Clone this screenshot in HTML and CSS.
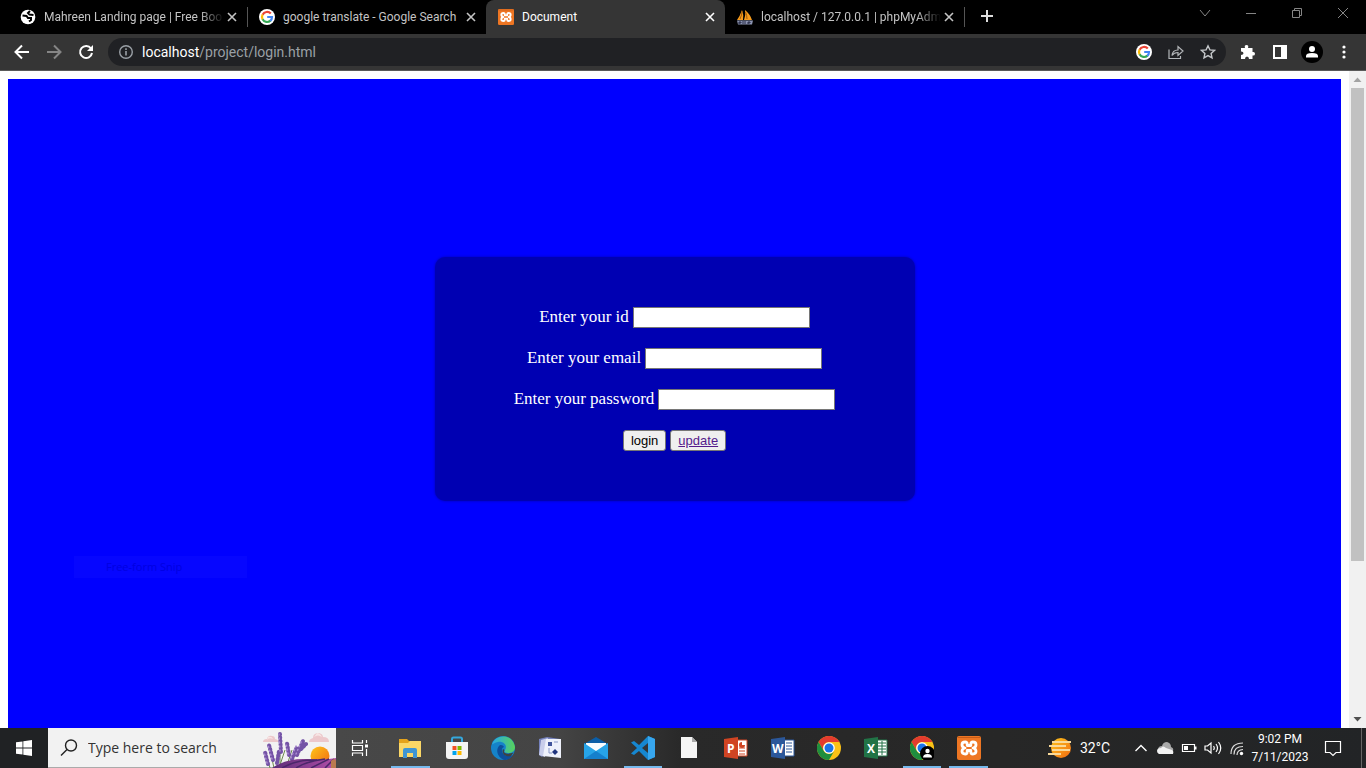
FILE: index.html
```html
<!DOCTYPE html>
<html lang="en">
<head>
<meta charset="utf-8">
<title>Document</title>
<link rel="stylesheet" href="styles.css">
</head>
<body>
<svg class="defs" width="0" height="0" aria-hidden="true">
  <defs>
    <symbol id="google" viewBox="0 0 16 16">
      <circle cx="8" cy="8" r="8" fill="#fff"/>
      <g fill="none" stroke-width="2.2">
        <path d="M11.8 4.6A5 5 0 0 0 3.6 5.7" stroke="#ea4335"/>
        <path d="M3.6 5.6a5 5 0 0 0 0 4.8" stroke="#fbbc05"/>
        <path d="M3.6 10.3a5 5 0 0 0 7.9 1.3" stroke="#34a853"/>
        <path d="M11.3 11.8A5 5 0 0 0 13 8H8.2" stroke="#4285f4"/>
      </g>
    </symbol>
    <symbol id="xampp" viewBox="0 0 24 24">
      <rect width="24" height="24" rx="2" fill="#ee7623"/>
      <path d="M1 1.500h22" stroke="#c75c18"/>
      <path d="M10.200 9.500V8q0-2-2-2Q5 6 5 8.700T8 12q-3 .6-3 3.300T8.200 18q2 0 2-2v-1.500M13.800 9.500V8q0-2 2-2Q19 6 19 8.700T16 12q3 .6 3 3.300T15.800 18q-2 0-2-2v-1.500M10.200 9.500h3.600M10.200 14.500h3.600" fill="none" stroke="#fff" stroke-width="2.800" stroke-linejoin="round" stroke-linecap="round"/>
    </symbol>
    <symbol id="close" viewBox="0 0 16 16">
      <path d="M4 4l8 8M12 4l-8 8" stroke="currentColor" stroke-width="1.600" fill="none"/>
    </symbol>
    <symbol id="chrome" viewBox="0 0 24 24">
      <circle cx="12" cy="12" r="12" fill="#fbc116"/>
      <path d="M1.600 6A12 12 0 0 1 22.400 6H12a6 6 0 0 0-5.200 9z" fill="#e33b2e"/>
      <path d="M1.600 6A12 12 0 0 0 12 24l5.200-9A6 6 0 0 1 6.800 15z" fill="#1e8e3e"/>
      <circle cx="12" cy="12" r="5.800" fill="#fff"/>
      <circle cx="12" cy="12" r="4.500" fill="#1a73e8"/>
    </symbol>
    <linearGradient id="sun" x1="0" y1="0" x2="1" y2="1"><stop offset="0" stop-color="#ffc61a"/><stop offset="1" stop-color="#f06a12"/></linearGradient>
    <linearGradient id="edgeTop" x1="0" y1="0" x2="1" y2="0"><stop offset="0" stop-color="#28a8e6"/><stop offset="1" stop-color="#58d35a"/></linearGradient>
    <linearGradient id="field" x1="0" y1="0" x2="1" y2="0"><stop offset="0" stop-color="#5c2d78"/><stop offset="1" stop-color="#b24fa8"/></linearGradient>
  </defs>
</svg>

<div class="screen">
  <header class="tabstrip">
    <nav class="tabs" aria-label="Tabs">
      <div class="tab">
        <svg class="favicon" viewBox="0 0 16 16"><circle cx="8" cy="8" r="7.300" fill="#fff"/><path d="M2.500 6.500l4 .5 1.500 2h3v2l-2 1.500M13.500 6l-4-.5L8 4l2-2" fill="none" stroke="#000" stroke-width="2"/></svg>
        <span class="tab-title fade">Mahreen Landing page | Free Boo</span>
        <button class="tab-close" aria-label="Close tab"><svg><use href="#close"/></svg></button>
      </div>
      <div class="tab divided">
        <svg class="favicon"><use href="#google"/></svg>
        <span class="tab-title">google translate - Google Search</span>
        <button class="tab-close" aria-label="Close tab"><svg><use href="#close"/></svg></button>
      </div>
      <div class="tab active">
        <svg class="favicon"><use href="#xampp"/></svg>
        <span class="tab-title">Document</span>
        <button class="tab-close" aria-label="Close tab"><svg><use href="#close"/></svg></button>
      </div>
      <div class="tab">
        <svg class="favicon" viewBox="0 0 16 16"><path d="M0 11Q3 7 5 1q2 5 1 10zM7 11q2-5 1-10 5 4 7 10z" fill="#f89c1c"/><path d="M3 10Q5 6 5 2M10 10Q10 6 8.500 3" stroke="#a35a08" fill="none"/><path d="M0 11.500h16l-1 4H1z" fill="#8b93b0"/><path d="M2 15v-2h2v1H2m4 1v-3M8 12v3M11 15v-2h2v1h-2" stroke="#262b45" fill="none"/></svg>
        <span class="tab-title fade">localhost / 127.0.0.1 | phpMyAdm</span>
        <button class="tab-close" aria-label="Close tab"><svg><use href="#close"/></svg></button>
      </div>
      <button class="new-tab" aria-label="New tab"><svg viewBox="0 0 16 16"><path d="M8 2v12M2 8h12" stroke="#ddd" stroke-width="2"/></svg></button>
    </nav>
    <div class="window-controls">
      <button aria-label="Search tabs"><svg viewBox="0 0 12 12"><path d="M1 3l5 6 5-6"/></svg></button>
      <button aria-label="Minimize"><svg viewBox="0 0 12 12"><path d="M1 6.500h10"/></svg></button>
      <button aria-label="Restore"><svg viewBox="0 0 12 12"><path d="M1.500 3.500h7v7h-7zM3.500 3.500v-2h7v7h-2"/></svg></button>
      <button aria-label="Close"><svg viewBox="0 0 12 12"><path d="M1 1l10 10M11 1L1 11"/></svg></button>
    </div>
  </header>

  <div class="toolbar">
    <button class="tool" aria-label="Back"><svg viewBox="0 0 16 16"><path d="M15 8H2M8 1.500L1.500 8 8 14.500" fill="none" stroke="#fff" stroke-width="2"/></svg></button>
    <button class="tool" aria-label="Forward"><svg viewBox="0 0 16 16"><path d="M1 8h13M8 1.500L14.500 8 8 14.500" fill="none" stroke="#858585" stroke-width="2"/></svg></button>
    <button class="tool" aria-label="Reload"><svg viewBox="0 0 16 16"><path d="M13 4.500A6 6 0 1 0 14 9" fill="none" stroke="#fff" stroke-width="2"/><path d="M15 1v6H9z" fill="#fff"/></svg></button>
    <div class="omnibox">
      <svg class="info" viewBox="0 0 16 16"><circle cx="8" cy="8" r="6.300" fill="none" stroke="#9aa0a6" stroke-width="1.400"/><path d="M8 7v4.500M8 4.300v1.600" stroke="#9aa0a6" stroke-width="1.600"/></svg>
      <a class="url" href="#login"><span class="host">localhost</span>/project/login.html</a>
      <button class="tool" aria-label="Google"><svg><use href="#google"/></svg></button>
      <button class="tool" aria-label="Share"><svg viewBox="0 0 16 16"><path d="M1 5.500v9h11.500V12M4 11.500Q4.500 6 10 6V2.500L15 7l-5 4.500V8.500Q6 8.500 4 11.500z" fill="none" stroke="#b4b7ba" stroke-width="1.200"/></svg></button>
      <button class="tool" aria-label="Bookmark"><svg viewBox="0 0 16 16"><path d="M8 1.800l1.900 4.100 4.500.5-3.300 3 .9 4.400L8 11.600l-4 2.200.9-4.400-3.300-3 4.500-.5z" fill="none" stroke="#c4c7ca" stroke-width="1.400"/></svg></button>
    </div>
    <button class="tool" aria-label="Extensions"><svg viewBox="0 0 16 16"><path d="M1 4h4q-1-3 1.500-3T8 4h4.500v4Q15 7.500 15 9.700t-2.500 1.800V15H9q0-2.500-2-2.500T5 15H1v-4q2.500 0 2.500-1.800T1 7.500z" fill="#fff"/></svg></button>
    <button class="tool" aria-label="Side panel"><svg viewBox="0 0 16 16"><path d="M1 1h14v14H1zM3 3v10h6V3z" fill="#fff" fill-rule="evenodd"/></svg></button>
    <button class="tool profile" aria-label="Profile"><svg viewBox="0 0 22 22"><circle cx="11" cy="11" r="11"/><circle cx="11" cy="8" r="3" fill="#fff"/><path d="M5 16.500v-1.500q0-3 6-3t6 3v1.500z" fill="#fff"/></svg></button>
    <button class="tool" aria-label="Menu"><svg viewBox="0 0 16 16"><g fill="#fff"><circle cx="8" cy="3" r="1.600"/><circle cx="8" cy="8" r="1.600"/><circle cx="8" cy="13" r="1.600"/></g></svg></button>
  </div>

  <div class="viewport">
    <main class="page" id="login">
      <form class="card">
        <div class="row"><label for="user-id">Enter your id</label><input id="user-id" type="text"></div>
        <div class="row"><label for="email">Enter your email</label><input id="email" type="email"></div>
        <div class="row"><label for="password">Enter your password</label><input id="password" type="password"></div>
        <div class="row"><button class="btn" type="button">login</button><a class="btn link" href="#update">update</a></div>
      </form>
      <div class="snip">Free-form Snip</div>
    </main>
    <div class="scrollbar" aria-hidden="true">
      <svg viewBox="0 0 17 17"><path d="M4.500 11h8l-4-4.500z" fill="#a3a3a3"/></svg>
      <div class="track"><div class="thumb"></div></div>
      <svg viewBox="0 0 17 17"><path d="M4.500 6h8l-4 4.500z" fill="#505050"/></svg>
    </div>
  </div>

  <footer class="taskbar">
    <button class="start" aria-label="Start"><svg viewBox="0 0 16 16"><path d="M0 2.300L6.500 1.400v6.200H0zM7.300 1.200L16 0v7.600H7.300zM0 8.400h6.500v6.200L0 13.700zM7.300 8.400H16V16l-8.700-1.200z" fill="#fff"/></svg></button>
    <div class="search">
      <svg class="lens" viewBox="0 0 18 18"><circle cx="11" cy="6.500" r="5.500" fill="none" stroke="#222" stroke-width="1.400"/><path d="M7 10.500l-6 6" stroke="#222" stroke-width="1.500"/></svg>
      <input type="text" aria-label="Search" placeholder="Type here to search">
      <svg class="scene" viewBox="0 0 74 40">
        <path d="M1 14q0-3 4-3 1-4 5-3 3 0 3 3 4 1 3 3zM47 14q0-3 4-4 0-5 6-5 4 1 4 4 6 0 6 5z" fill="#ecc8cb"/>
        <path d="M5 12q2-3 6-1-1-3-5-2zM52 9q4-3 8 0-2-4-5-4z" fill="#f7e5e4"/>
        <circle cx="58" cy="28" r="9.500" fill="url(#sun)"/>
        <g stroke="#6b8a4b" fill="none"><path d="M8 40L4 26M12 40L8 22M18 40V14M17 40l6-18M24 40l6-18M26 38l12-18"/></g>
        <g stroke="#7453a6" stroke-width="4" stroke-linecap="round" stroke-dasharray="1 2.500" fill="none"><path d="M6 36L3 24M11 32L7 17M19 24L18 6M15 35l2-12M27 27l-2-12M30 31l5-12M35 27l6-14M39 21l5-5"/></g>
        <g stroke="#a98bd0" stroke-width="1.500" stroke-linecap="round" stroke-dasharray="1 3" fill="none"><path d="M5 35L2 24M10 31L6 17M18 23L17 6M26 26l-2-11M29 30l5-12M34 26l6-14"/></g>
        <path d="M10 40Q25 30 45 31t29-1v10z" fill="url(#field)"/>
        <path d="M20 40Q35 31 55 32M34 40Q45 33 63 31M49 40l18-9M63 40l9-9" stroke="#4b276a" stroke-width="1.500" fill="none"/>
        <path d="M69 33q4-4 5 0v7h-5z" fill="#b97a50"/>
      </svg>
    </div>
    <button class="task-view" aria-label="Task view"><svg viewBox="0 0 18 18"><path d="M1.500 1v3h10V1M1.500 17v-3h10v3M1.500 6.500h10v5h-10zM15.500 1v3M15.500 10v7" fill="none" stroke="#fff" stroke-width="1.200"/><path d="M14 5.500h3v3h-3z" fill="#fff"/></svg></button>
    <nav class="apps" aria-label="Applications">
      <button class="app running" aria-label="File Explorer"><svg viewBox="0 0 24 24"><path d="M1 3h8l2 2h11v16H1z" fill="#e5a31b"/><path d="M1 7h9l2-2h11v16H1z" fill="#fbd766"/><path d="M5 22v-8q0-2 2-2h10q2 0 2 2v8h-4v-5H9v5z" fill="#3f95d3"/></svg></button>
      <button class="app" aria-label="Microsoft Store"><svg viewBox="0 0 24 24"><path d="M7 8V3q0-1.500 1.500-1.500h7Q17 1.500 17 3v5" stroke="#35a7dc" stroke-width="2" fill="none"/><path d="M1 6h22v14q0 3-3 3H4q-3 0-3-3z" fill="#f4f4f4"/><path d="M7.500 10h4v4h-4z" fill="#f25022"/><path d="M12.500 10h4v4h-4z" fill="#7fba00"/><path d="M7.500 15h4v4h-4z" fill="#00a4ef"/><path d="M12.500 15h4v4h-4z" fill="#ffb900"/></svg></button>
      <button class="app" aria-label="Edge"><svg viewBox="0 0 24 24"><circle cx="12" cy="12" r="12" fill="#1583c9"/><path d="M1 8.500C4-2 22-3 24 11c0 4-3 6-7 6-3 0-4-1-3-3 3-5-2-9-7-8-3 .5-5 2-6 2.500z" fill="url(#edgeTop)"/><path d="M9 9c-5 4-3 12 4 15 4 0 7-2 9-5-4 2-10 1-11-4-.4-2 0-3 2-4-1-2-3-2-4-2z" fill="#0d4f9b"/><path d="M13.500 14c-2 3 2 5 9 2.500L20 20c-5 1-10-2-8-7z" fill="#3d4142"/></svg></button>
      <button class="app" aria-label="Help viewer"><svg viewBox="0 0 24 24"><path d="M1 3l8-2 13 2-6 2L4 21l-3-2z" fill="#7582bd"/><path d="M3 4l7-2-3 19-6-2z" fill="#c8cdea"/><path d="M8 3h15v19L5 20z" fill="#eef1fb"/><path d="M10 6h4v4h-4z" fill="#40549a"/><path d="M17 13l3 3-3 3-3-3z" fill="#1f347e"/><path d="M11 12v5h3M16 6h4" stroke="#8797c7" fill="none"/></svg></button>
      <button class="app" aria-label="Mail"><svg viewBox="0 0 24 24"><path d="M0 8l12-7 12 7v4H0z" fill="#0b5ea8"/><path d="M2 7h20v9H2z" fill="#fff"/><path d="M0 7l12 8L24 7v16H0z" fill="#27a4e8"/><path d="M0 23l12-8 12 8z" fill="#1580cd"/><path d="M2 7h20l-10 7z" fill="#f7fbff"/></svg></button>
      <button class="app running" aria-label="Visual Studio Code"><svg viewBox="0 0 24 24"><path d="M17 0l7 3v18l-7 3L8 15l-5 4-3-1.500L6 12 0 6.500 3 5l5 4z" fill="#1687d0"/><path d="M17 7v10l-6-5z" fill="#333637"/><path d="M17 0l7 3v18l-7 3z" fill="#37a6ee"/></svg></button>
      <button class="app" aria-label="Document file"><svg viewBox="0 0 24 24"><path d="M4 1h11l5 5v16H4z" fill="#f5f5f5"/><path d="M15 1v5h5z" fill="#aaa"/></svg></button>
      <button class="app" aria-label="PowerPoint"><svg viewBox="0 0 24 24"><path d="M11 4h12v16H11z" fill="#fff" stroke="#d04423"/><path d="M15 12h6M15 15h6M15 18h6" stroke="#d04423"/><path d="M18 6a3 3 0 1 0 3 3h-3z" fill="#d04423"/><path d="M0 3l14-2v22L0 21z" fill="#d04423"/><text class="glyph" x="3" y="17">P</text></svg></button>
      <button class="app" aria-label="Word"><svg viewBox="0 0 24 24"><path d="M11 4h12v16H11z" fill="#fff" stroke="#2b579a"/><path d="M15 7h6M15 10h6M15 13h6M15 16h6" stroke="#2b579a"/><path d="M0 3l14-2v22L0 21z" fill="#2b579a"/><text class="glyph" x="1" y="17">W</text></svg></button>
      <button class="app" aria-label="Chrome"><svg><use href="#chrome"/></svg></button>
      <button class="app" aria-label="Excel"><svg viewBox="0 0 24 24"><path d="M11 4h12v16H11z" fill="#fff" stroke="#217346"/><path d="M14 7h8M14 10h8M14 13h8M14 16h8M18 5v14" stroke="#217346"/><path d="M0 3l14-2v22L0 21z" fill="#217346"/><text class="glyph" x="3" y="17">X</text></svg></button>
      <button class="app running" aria-label="Chrome profile"><svg viewBox="0 0 24 24"><use href="#chrome"/><circle cx="17.500" cy="17.500" r="7.500"/><circle cx="17.500" cy="15" r="2.200" fill="#fff"/><path d="M13 21.500q0-3.500 4.500-3.500t4.500 3.500z" fill="#fff"/></svg></button>
      <button class="app running" aria-label="XAMPP"><svg><use href="#xampp"/></svg></button>
    </nav>
    <div class="tray">
      <div class="weather">
        <svg viewBox="0 0 24 24"><circle cx="13" cy="12" r="10" fill="url(#sun)"/><path d="M4 6h19M1 10h17M4 14h18M0 18h13" stroke="#f9d999" stroke-width="1.800"/></svg>
        <span>32°C</span>
      </div>
      <div class="status">
        <svg viewBox="0 0 18 18"><path d="M3.500 12L9 6.500l5.500 5.500" fill="none" stroke="#fff" stroke-width="1.400"/></svg>
        <svg viewBox="0 0 18 18"><path d="M2 11q0-4 4-4 1-4 5-4 4 1 4 5 3 1 2 4z" fill="#a9a9a9"/><path d="M1 12q0-3 4-3 2-3 5 0l6 2q2 1 1 4H3q-2-1-2-3z" fill="#f2f2f2"/></svg>
        <svg viewBox="0 0 18 18"><path d="M2.500 5.500h12v7h-12z" fill="none" stroke="#fff" stroke-width="1.200"/><path d="M4 7h4v4H4zM15 7.500h1.500v3H15z" fill="#fff"/></svg>
        <svg viewBox="0 0 18 18"><path d="M1 7h2.500L7 4v10l-3.500-3H1zM9.500 7q1.500 2 0 4M12 5q3 4 0 8M14.500 3q4.500 6 0 12" fill="none" stroke="#fff" stroke-width="1.200"/></svg>
        <svg viewBox="0 0 18 18"><path d="M3 15Q3 4 15 4M6 15.500Q6 7.500 15 7.500M9 16q0-5 6-5.500" fill="none" stroke="#ddd" stroke-width="1.200"/><circle cx="13.500" cy="14.500" r="1.700" fill="#fff"/></svg>
      </div>
      <time class="clock" datetime="2023-07-11T21:02"><span>9:02 PM</span><span>7/11/2023</span></time>
      <button class="notify" aria-label="Notifications"><svg viewBox="0 0 18 18"><path d="M1.500 2.500h15v11H12l-3 3-3-3H1.500z" fill="none" stroke="#fff" stroke-width="1.200"/></svg></button>
    </div>
  </footer>
</div>
</body>
</html>
```

FILE: styles.css
```css
* { box-sizing: border-box; }

body {
  margin: 0;
  background: #fff;
  font-family: "Open Sans", "Noto Sans", sans-serif;
}

button {
  margin: 0;
  padding: 0;
  border: 0;
  background: none;
}

.defs { position: absolute; }

.screen {
  display: flex;
  flex-direction: column;
  height: 100vh;
  overflow: hidden;
}

/* Tab strip */
.tabstrip {
  display: flex;
  justify-content: space-between;
  flex: none;
  height: 34px;
  padding-left: 8px;
  background: #000;
}

.tabs { display: flex; }

.tab {
  display: flex;
  align-items: center;
  width: 239px;
  padding: 0 7px 0 12px;
  color: #c4c4c4;
  font: 12px Roboto, sans-serif;
}

.tab.divided, .new-tab {
  background: linear-gradient(#555, #555) 0 center / 1px 20px no-repeat;
}

.tab.active {
  border-radius: 8px 8px 0 0;
  background: #353535;
  color: #fff;
}

.favicon {
  flex: none;
  width: 16px;
  height: 16px;
  margin-right: 8px;
}

.tab-title {
  flex: 1;
  white-space: nowrap;
}

.tab-title.fade {
  mask-image: linear-gradient(to right, #000 156px, transparent 180px);
}

.tab-close { display: flex; color: inherit; }
.tab-close svg { width: 16px; height: 16px; }

.new-tab { width: 46px; }
.new-tab svg { width: 16px; height: 16px; }

.window-controls { display: flex; }

.window-controls button {
  width: 46px;
  height: 28px;
}

.window-controls svg {
  width: 12px;
  height: 12px;
  fill: none;
  stroke: #858585;
}

/* Toolbar */
.toolbar {
  display: flex;
  align-items: center;
  flex: none;
  height: 37px;
  padding: 0 6px;
  border-bottom: 1px solid #5a5a5a;
  background: #353535;
}

.tool {
  display: flex;
  align-items: center;
  justify-content: center;
  width: 32px;
  height: 28px;
}

.tool svg { width: 16px; height: 16px; }
.tool.profile svg { width: 22px; height: 22px; }

.omnibox {
  display: flex;
  align-items: center;
  flex: 1;
  height: 28px;
  margin: 0 6px;
  padding: 0 2px 0 10px;
  border-radius: 14px;
  background: #202124;
}

.info { width: 16px; height: 16px; }

.url {
  flex: 1;
  margin-left: 8px;
  color: #9aa0a6;
  font: 14px Roboto, sans-serif;
  text-decoration: none;
}

.host { color: #fff; }

/* Web page */
.viewport {
  display: flex;
  flex: 1;
  min-height: 0;
}

.page {
  position: relative;
  flex: 1;
  margin: 8px 8px 0;
  padding-top: 178px;
  background: #00f;
}

.card {
  display: flex;
  flex-direction: column;
  gap: 20px;
  width: 480px;
  margin: 0 auto;
  padding: 50px;
  border-radius: 10px;
  background: #0000b2;
  box-shadow: 0 0 3px #0000b2;
  color: #fff;
  font-family: "Liberation Serif", serif;
  font-size: 17px;
}

.row {
  display: flex;
  align-items: center;
  justify-content: center;
  gap: 4px;
  height: 21px;
}

.row label { line-height: 19px; align-self: flex-start; }

.row input {
  width: 177px;
  height: 21px;
  border: 1px solid #767676;
  background: #fff;
}

.btn {
  height: 21px;
  padding: 0 7px;
  border: 1px solid #767676;
  border-radius: 3px;
  background: #efefef;
  color: #000;
  font: 13px/19px "Liberation Sans", sans-serif;
}

.btn.link { color: #551a8b; }

.snip {
  position: absolute;
  top: 477px;
  left: 66px;
  width: 173px;
  height: 22px;
  padding-left: 32px;
  background: #0606ff;
  color: #0000e2;
  font-size: 11px;
  line-height: 22px;
}

.scrollbar {
  display: flex;
  flex-direction: column;
  width: 17px;
  background: #f1f1f1;
}

.scrollbar svg { width: 17px; height: 17px; }

.track { flex: 1; padding: 0 2px; }

.thumb {
  height: 76%;
  background: #c1c1c1;
}

/* Taskbar */
.taskbar {
  display: flex;
  flex: none;
  height: 40px;
  background: linear-gradient(to right, #484848 336px, #444 560px, #292929 680px, #272727 1000px, #222426);
  color: #fff;
}

.start { width: 48px; background: #202224; }
.start svg { width: 16px; height: 16px; }

.start, .task-view, .notify {
  display: flex;
  align-items: center;
  justify-content: center;
}

.search {
  display: flex;
  align-items: center;
  width: 288px;
  padding-left: 12px;
  border-bottom: 1px solid #aaa;
  background: #f2f2f2;
}

.lens { flex: none; width: 18px; height: 18px; }

.search input {
  flex: 1;
  min-width: 0;
  margin-left: 10px;
  padding: 0;
  border: 0;
  background: none;
  font: 14px "Open Sans", sans-serif;
}

.search input::placeholder { color: #333; opacity: 1; }

.scene { flex: none; width: 74px; height: 40px; }

.task-view { width: 48px; }
.task-view svg { width: 18px; height: 18px; }

.apps {
  display: grid;
  grid-template-columns: repeat(13, 1fr);
  width: 605px;
  margin-left: 3px;
}

.app {
  display: flex;
  align-items: center;
  justify-content: center;
  margin: 0 4px;
  border-top: 2px solid transparent;
  border-bottom: 2px solid transparent;
}

.app.running { border-bottom-color: #76b9ed; }
.app svg { width: 24px; height: 24px; }

.glyph {
  fill: #fff;
  font: bold 12px "Open Sans", sans-serif;
}

.tray {
  display: flex;
  align-items: center;
  margin-left: auto;
  padding-right: 4px;
  background: linear-gradient(#666, #666) right 4px top / 1px 40px no-repeat;
}

.weather {
  display: flex;
  align-items: center;
  gap: 8px;
  margin-right: 22px;
  font: 14px Roboto, sans-serif;
}

.weather svg { width: 24px; height: 24px; }

.status { display: flex; gap: 6px; }
.status svg { width: 18px; height: 18px; }

.clock {
  display: flex;
  flex-direction: column;
  align-items: center;
  width: 68px;
  font: 12px/18px Roboto, sans-serif;
}

.notify { width: 38px; margin-right: 10px; height: 40px; }
.notify svg { width: 18px; height: 18px; }
```
